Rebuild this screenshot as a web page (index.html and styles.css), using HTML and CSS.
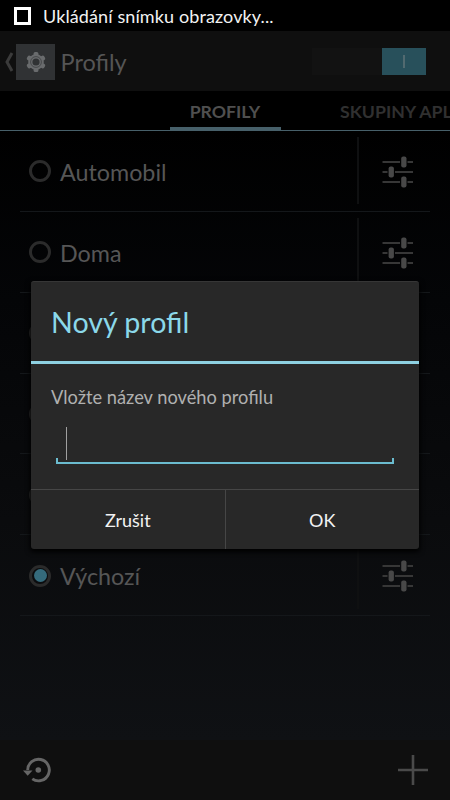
FILE: index.html
```html
<!DOCTYPE html>
<html lang="cs">
<head>
<meta charset="utf-8">
<title>Profily</title>
<link rel="stylesheet" href="styles.css">
</head>
<body>
<svg width="0" height="0" class="defs" aria-hidden="true">
  <symbol id="sliders" viewBox="0 0 32 32">
    <path d="M0.5 6H18M25.500 6H31M0.500 16H5.500M13 16H31M0.500 26H18M25.500 26H31" stroke="#373737" stroke-width="2" fill="none"/>
    <g fill="#484848"><rect x="19.200" y="0.500" width="5.300" height="11" rx="2"/><rect x="6.600" y="10.500" width="5.300" height="11" rx="2"/><rect x="19.200" y="20.500" width="5.300" height="11" rx="2"/></g>
  </symbol>
</svg>
<div class="screen">
  <header class="status"><span class="square"></span><span class="status-text">Ukládání snímku obrazovky...</span></header>
  <div class="actionbar">
    <svg class="back" viewBox="0 0 10 20"><path d="M8 1L3 10L8 19" fill="none" stroke="#3b3b3b" stroke-width="3"/></svg>
    <span class="appicon"><svg viewBox="-10 -10 20 20" width="20" height="20">
      <g fill="#696b6d"><circle r="7.800"/><g id="t"><rect x="-2.400" y="-9.900" width="4.800" height="19.800" rx="1.500"/></g><use href="#t" transform="rotate(60)"/><use href="#t" transform="rotate(120)"/></g>
      <circle r="5.400" fill="none" stroke="#46484a" stroke-width="1"/><circle r="3.600" fill="#303234"/>
    </svg></span>
    <span class="app-title">Profily</span>
    <span class="switch"><span class="thumb"><i></i></span></span>
  </div>
  <nav class="tabs"><span class="tab active">PROFILY</span><span class="tab">SKUPINY APLIKACÍ</span></nav>
  <main class="list">
    <div class="row"><span class="radio"></span><span class="name">Automobil</span><span class="tune"><svg><use href="#sliders"/></svg></span></div>
    <div class="row"><span class="radio"></span><span class="name">Doma</span><span class="tune"><svg><use href="#sliders"/></svg></span></div>
    <div class="row"><span class="radio"></span><span class="name"></span><span class="tune"><svg><use href="#sliders"/></svg></span></div>
    <div class="row"><span class="radio"></span><span class="name"></span><span class="tune"><svg><use href="#sliders"/></svg></span></div>
    <div class="row"><span class="radio"></span><span class="name"></span><span class="tune"><svg><use href="#sliders"/></svg></span></div>
    <div class="row"><span class="radio checked"></span><span class="name">Výchozí</span><span class="tune"><svg><use href="#sliders"/></svg></span></div>
  </main>
  <footer class="bottombar">
    <svg width="28" height="26" viewBox="0 0 28 26"><path d="M4.700 13A10.800 10.800 0 1 1 9.300 21.900" fill="none" stroke="#666" stroke-width="2.900"/><path d="M0 13.500H9.500L4.700 18.700Z" fill="#666"/><circle cx="15.300" cy="13" r="2.800" fill="#666"/></svg>
    <svg width="30" height="30" viewBox="0 0 30 30"><path d="M15 0V30M0 15H30" stroke="#4a4a4a" stroke-width="2.600"/></svg>
  </footer>
  <section class="dialog" role="dialog">
    <h1>Nový profil</h1>
    <div class="body"><p>Vložte název nového profilu</p><div class="input"><span class="caret"></span></div></div>
    <div class="buttons"><span class="button">Zrušit</span><span class="button">OK</span></div>
  </section>
</div>
</body>
</html>
```
FILE: styles.css
```css
* { box-sizing: border-box; }
body { margin: 0; background: #000; font-family: Lato, sans-serif; }
.defs { position: absolute; }
.screen { position: relative; width: 450px; height: 800px; overflow: hidden; display: flex; flex-direction: column; background: linear-gradient(#000 130px, #040507 300px, #0a0b0d 520px, #0f1114 740px); }
.status { height: 31px; flex: none; display: flex; align-items: center; padding-left: 14px; background: #000; color: #f2f2f2; }
.square { width: 17px; height: 18px; border: 3px solid #fff; margin-right: 12px; }
.status-text { font-size: 18px; letter-spacing: 0.11px; line-height: 22px; padding-top: 1px; white-space: nowrap; }
.actionbar { height: 60px; flex: none; display: flex; align-items: center; background: #0f0f0f; padding: 1px 24px 0 4px; }
.back { width: 10px; height: 20px; margin-right: 2px; }
.appicon { width: 39px; height: 36px; background: #303234; display: flex; align-items: center; justify-content: center; }
.app-title { margin-left: 5.5px; font-size: 23.5px; color: #555; flex: 1; }
.switch { width: 114px; height: 27px; background: #121212; display: flex; justify-content: flex-end; }
.thumb { width: 44px; height: 27px; background: #28505b; display: flex; align-items: center; justify-content: center; }
.thumb i { width: 2px; height: 13px; background: #526a70; }
.tabs { height: 40px; flex: none; display: flex; padding-left: 169.5px; border-bottom: 1px solid #47606a; white-space: nowrap; overflow: hidden; }
.tab { flex: none; font-size: 17.7px; font-weight: 700; line-height: 42px; color: #303030; height: 39px; margin-left: 59.5px; }
.tab.active { width: 111px; margin-left: 0; text-align: center; color: #4f4f4f; border-bottom: 3px solid #47606a; }
.list { flex: 1; padding: 0 20px; }
.row { height: 80.85px; display: flex; align-items: center; border-bottom: 1px solid #14171a; padding-left: 9px; }
.radio { width: 22px; height: 22px; border: 3px solid #2b2b2b; border-radius: 50%; flex: none; display: flex; position: relative; top: 0.5px; }
.radio.checked::after { content: ""; width: 13px; height: 13px; margin: auto; flex: none; border-radius: 50%; background: #356b7c; margin-left: 1.5px; }
.name { flex: 1; margin-left: 9px; padding-top: 2px; font-size: 23.3px; color: #565656; }
.tune { width: 73px; height: 67px; border-left: 2px solid #0f1011; display: flex; align-items: center; padding-left: 23px; padding-top: 2px; }
.tune svg { width: 32px; height: 32px; }
.bottombar { height: 60px; flex: none; background: #0f0f0f; display: flex; justify-content: space-between; align-items: center; padding: 0 22.5px 1px 23px; }
.dialog { position: absolute; left: 31px; top: 281px; width: 388px; height: 268px; background: #282828; border-radius: 3px; border-top: 1px solid #363636; box-shadow: 0 2px 5px 1px #000; display: flex; flex-direction: column; }
.dialog h1 { margin: 0; height: 82px; border-bottom: 3px solid #8ed1e2; padding-left: 20px; font-size: 28.6px; font-weight: 400; line-height: 80px; color: #8bd8ea; }
.body { height: 125px; padding: 21px 25px 0; display: flex; flex-direction: column; }
.body p { margin: 0 0 0 -5px; font-size: 18.25px; line-height: 24px; color: #b0b0b0; white-space: nowrap; }
.input { margin-top: 18px; height: 37px; display: flex; padding-left: 10px; border-bottom: 2px solid #6bbccf; background: linear-gradient(#6bbccf, #6bbccf) 0 100% / 2px 4px no-repeat, linear-gradient(#6bbccf, #6bbccf) 100% 100% / 2px 4px no-repeat; }
.caret { width: 1px; height: 33px; background: #a0a0a0; }
.buttons { flex: 1; display: flex; border-top: 1px solid #464646; }
.button { flex: 1; display: flex; align-items: center; justify-content: center; padding-top: 1px; font-size: 18px; color: #f2f2f2; }
.button + .button { border-left: 1px solid #464646; }
```
